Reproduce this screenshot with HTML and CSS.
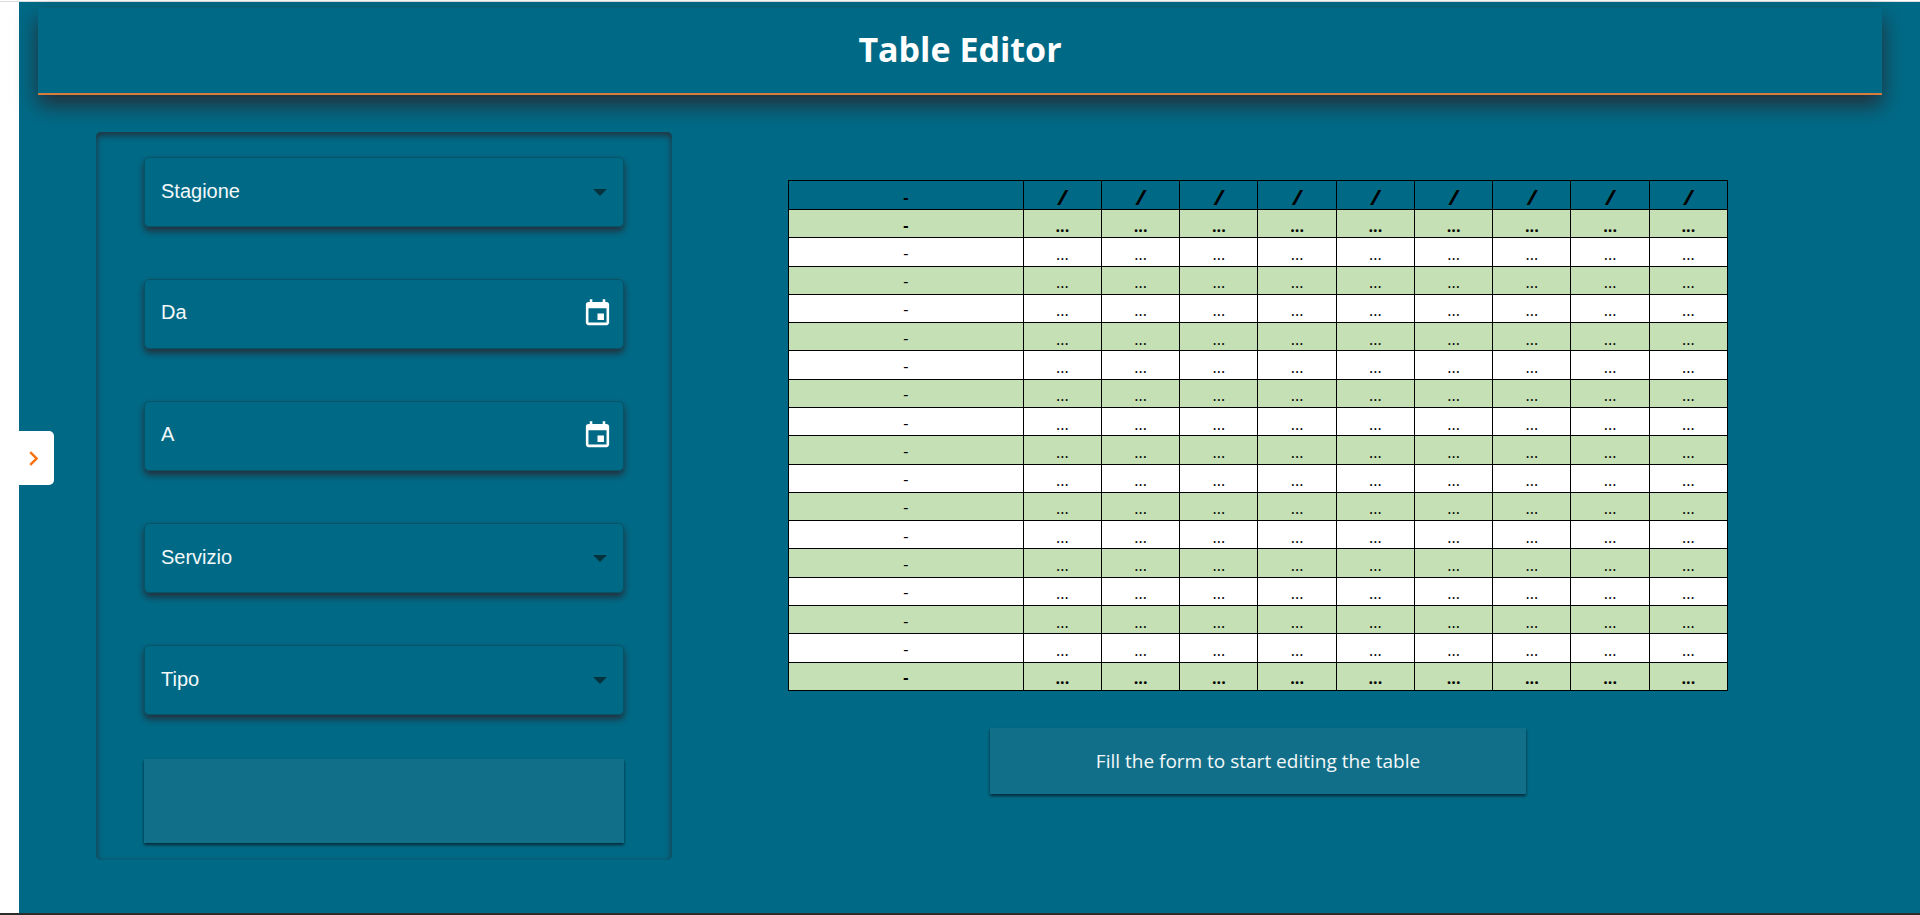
FILE: index.html
```html
<!DOCTYPE html>
<html lang="it">
<head>
<meta charset="utf-8">
<title>Table Editor</title>
<link rel="stylesheet" href="styles.css">
</head>
<body>
<div class="app">
  <main class="page">
    <button class="drawer-toggle" type="button" aria-label="Open menu">
      <svg class="chevron" viewBox="0 0 24 24" aria-hidden="true"><path d="M10 6 8.590 7.410 13.170 12l-4.580 4.590L10 18l6-6z"/></svg>
    </button>
    <header class="header"><h1 class="title">Table Editor</h1></header>
    <div class="content">
      <form class="panel">
        <div class="field">
          <select class="control" aria-label="Stagione"><option>Stagione</option></select>
          <svg class="caret" viewBox="0 0 14 7" aria-hidden="true"><path d="M0 0h14L7 7z"/></svg>
        </div>
        <div class="field">
          <input class="control" type="text" placeholder="Da" aria-label="Da">
          <button class="calendar" type="button" aria-label="Scegli data di inizio"><svg viewBox="0 0 24 24" aria-hidden="true"><path d="M19 3h-1V1h-2v2H8V1H6v2H5c-1.110 0-1.990.9-1.990 2L3 19c0 1.100.89 2 2 2h14c1.100 0 2-.9 2-2V5c0-1.100-.9-2-2-2zm0 16H5V8h14v11zM17 12h-5v5h5v-5z"/></svg></button>
        </div>
        <div class="field">
          <input class="control" type="text" placeholder="A" aria-label="A">
          <button class="calendar" type="button" aria-label="Scegli data di fine"><svg viewBox="0 0 24 24" aria-hidden="true"><path d="M19 3h-1V1h-2v2H8V1H6v2H5c-1.110 0-1.990.9-1.990 2L3 19c0 1.100.89 2 2 2h14c1.100 0 2-.9 2-2V5c0-1.100-.9-2-2-2zm0 16H5V8h14v11zM17 12h-5v5h5v-5z"/></svg></button>
        </div>
        <div class="field">
          <select class="control" aria-label="Servizio"><option>Servizio</option></select>
          <svg class="caret" viewBox="0 0 14 7" aria-hidden="true"><path d="M0 0h14L7 7z"/></svg>
        </div>
        <div class="field">
          <select class="control" aria-label="Tipo"><option>Tipo</option></select>
          <svg class="caret" viewBox="0 0 14 7" aria-hidden="true"><path d="M0 0h14L7 7z"/></svg>
        </div>
        <button class="submit" type="button" aria-label="Invia"></button>
      </form>
      <section class="preview">
        <table class="grid">
          <thead>
            <tr><th class="name">-</th><th>/</th><th>/</th><th>/</th><th>/</th><th>/</th><th>/</th><th>/</th><th>/</th><th>/</th></tr>
          </thead>
          <tbody>
            <tr class="strong"><td>-</td><td>...</td><td>...</td><td>...</td><td>...</td><td>...</td><td>...</td><td>...</td><td>...</td><td>...</td></tr>
            <tr><td>-</td><td>...</td><td>...</td><td>...</td><td>...</td><td>...</td><td>...</td><td>...</td><td>...</td><td>...</td></tr>
            <tr><td>-</td><td>...</td><td>...</td><td>...</td><td>...</td><td>...</td><td>...</td><td>...</td><td>...</td><td>...</td></tr>
            <tr><td>-</td><td>...</td><td>...</td><td>...</td><td>...</td><td>...</td><td>...</td><td>...</td><td>...</td><td>...</td></tr>
            <tr><td>-</td><td>...</td><td>...</td><td>...</td><td>...</td><td>...</td><td>...</td><td>...</td><td>...</td><td>...</td></tr>
            <tr><td>-</td><td>...</td><td>...</td><td>...</td><td>...</td><td>...</td><td>...</td><td>...</td><td>...</td><td>...</td></tr>
            <tr><td>-</td><td>...</td><td>...</td><td>...</td><td>...</td><td>...</td><td>...</td><td>...</td><td>...</td><td>...</td></tr>
            <tr><td>-</td><td>...</td><td>...</td><td>...</td><td>...</td><td>...</td><td>...</td><td>...</td><td>...</td><td>...</td></tr>
            <tr><td>-</td><td>...</td><td>...</td><td>...</td><td>...</td><td>...</td><td>...</td><td>...</td><td>...</td><td>...</td></tr>
            <tr><td>-</td><td>...</td><td>...</td><td>...</td><td>...</td><td>...</td><td>...</td><td>...</td><td>...</td><td>...</td></tr>
            <tr><td>-</td><td>...</td><td>...</td><td>...</td><td>...</td><td>...</td><td>...</td><td>...</td><td>...</td><td>...</td></tr>
            <tr><td>-</td><td>...</td><td>...</td><td>...</td><td>...</td><td>...</td><td>...</td><td>...</td><td>...</td><td>...</td></tr>
            <tr><td>-</td><td>...</td><td>...</td><td>...</td><td>...</td><td>...</td><td>...</td><td>...</td><td>...</td><td>...</td></tr>
            <tr><td>-</td><td>...</td><td>...</td><td>...</td><td>...</td><td>...</td><td>...</td><td>...</td><td>...</td><td>...</td></tr>
            <tr><td>-</td><td>...</td><td>...</td><td>...</td><td>...</td><td>...</td><td>...</td><td>...</td><td>...</td><td>...</td></tr>
            <tr><td>-</td><td>...</td><td>...</td><td>...</td><td>...</td><td>...</td><td>...</td><td>...</td><td>...</td><td>...</td></tr>
            <tr class="strong"><td>-</td><td>...</td><td>...</td><td>...</td><td>...</td><td>...</td><td>...</td><td>...</td><td>...</td><td>...</td></tr>
          </tbody>
        </table>
        <p class="message">Fill the form to start editing the table</p>
      </section>
    </div>
  </main>
</div>
</body>
</html>
```
FILE: styles.css
```css
:root {
  --teal: #006a86;
  --teal-light: #126f89;
  --shade: #252e39;
  --orange: #d87d3c;
}

* {
  box-sizing: border-box;
}

body {
  margin: 0;
  background: #fff;
  font-family: "Open Sans", "Noto Sans", sans-serif;
}

.app {
  min-height: 100vh;
  padding: 1px 0 0 19px;
  display: flex;
  background: linear-gradient(#dcdfdf, #dcdfdf) 0 1px / 100% 1px no-repeat;
  border-bottom: 2px solid #2b2b2b;
}

.page {
  position: relative;
  flex: 1;
  margin-top: 1px;
  padding: 6px 2% 0 1%;
  background: var(--teal);
}

.drawer-toggle {
  position: absolute;
  left: 0;
  top: 429px;
  width: 35px;
  height: 54px;
  padding: 0;
  border: 0;
  border-radius: 0 5px 5px 0;
  background: #fff;
  display: flex;
  align-items: center;
  justify-content: center;
}

.chevron {
  width: 29px;
  height: 29px;
  margin-right: 6px;
  fill: #f9700e;
}

.header {
  padding: 18px 0 20px;
  border-bottom: 2px solid var(--orange);
  box-shadow: 0 10px 20px var(--shade);
}

.title {
  margin: 0;
  color: #fff;
  font-size: 34px;
  font-weight: 700;
  line-height: 47px;
  text-align: center;
}

.content {
  display: flex;
  align-items: flex-start;
  justify-content: space-between;
  padding: 37px 154px 52px 58px;
}

.panel {
  width: 35.300%;
  display: flex;
  flex-direction: column;
  gap: 52px;
  padding: 25px 48px 17px;
  border-radius: 5px;
  box-shadow: inset 0 3px 7px var(--shade);
}

.field {
  height: 70px;
  display: flex;
  align-items: center;
  position: relative;
  border: 1px solid #075466;
  border-radius: 5px;
  background: var(--teal);
  box-shadow: 0 4px 7px var(--shade);
}

.control {
  appearance: none;
  flex: 1;
  width: 100%;
  height: 100%;
  padding: 0 16px 3px;
  border: 0;
  background: transparent;
  color: #f4f8fa;
  font-family: "Liberation Sans", Arial, sans-serif;
  font-size: 20px;
}

.control::placeholder {
  color: #f4f8fa;
  opacity: 1;
}

.caret {
  position: absolute;
  right: 16px;
  width: 14px;
  height: 7px;
  fill: #04323d;
  pointer-events: none;
}

.calendar {
  flex: none;
  width: 31px;
  height: 31px;
  margin: 0 10px 2px 0;
  padding: 0;
  border: 0;
  background: none;
}

.calendar svg {
  display: block;
  fill: #fff;
}

.submit {
  height: 84px;
  margin-top: -8px;
  border: 0;
  background: var(--teal-light);
  box-shadow: 0 2px 3px #062936;
}

.preview {
  width: 57.600%;
  padding-top: 48px;
  display: flex;
  flex-direction: column;
  align-items: center;
}

.grid {
  width: 100%;
  height: 511px;
  table-layout: fixed;
  border-collapse: collapse;
  color: #000;
  font-size: 16px;
  line-height: 22px;
  text-align: center;
}

.grid th,
.grid td {
  padding: 4px 0 0;
  border: 1px solid #000;
}

.grid th {
  height: 29px;
  font-size: 21px;
  font-style: italic;
}

.grid .name {
  width: 25%;
  font-size: 16px;
  font-style: normal;
}

.grid tbody tr {
  background: #fff;
}

.grid tbody tr:nth-child(odd) {
  background: #c5e0b4;
}

.grid td:first-child {
  padding-top: 2px;
}

.strong {
  font-weight: 700;
}

.message {
  width: 57%;
  margin: 37px 0 0;
  padding: 20px;
  background: var(--teal-light);
  box-shadow: 0 2px 3px #062936;
  color: #f4f8fa;
  font-size: 19px;
  line-height: 26px;
  text-align: center;
}
```
